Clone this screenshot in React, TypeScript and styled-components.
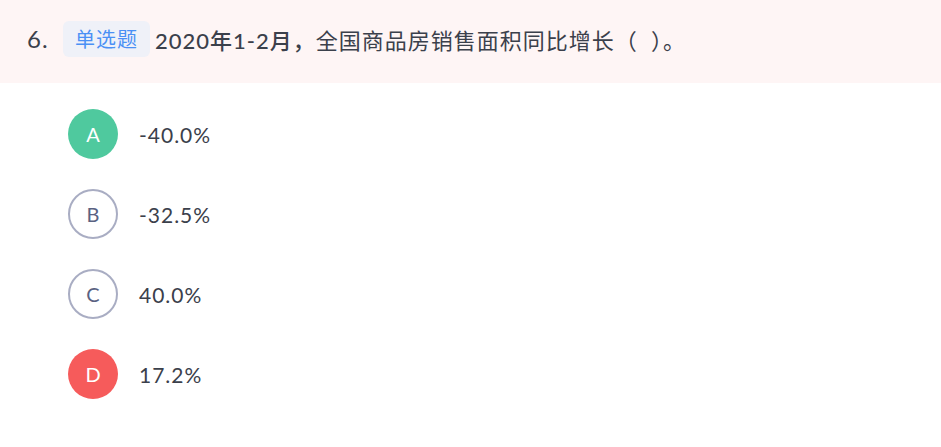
import styled, { createGlobalStyle } from "styled-components";

const GlobalStyle = createGlobalStyle`
  html, body {
    margin: 0;
    padding: 0;
    background: #fff;
    font-family: Lato, "Noto Sans CJK SC", sans-serif;
  }
`;

const Wrapper = styled.div`
  width: 941px;
  height: 447px;
  background: #fff;
`;

const Header = styled.div`
  height: 83px;
  background: #fef5f5;
  display: flex;
  align-items: center;
  padding-left: 27px;
  box-sizing: border-box;
  padding-bottom: 6px;
`;

const Number = styled.span`
  font-size: 24px;
  color: #3b404b;
  width: 36px;
  letter-spacing: 1px;
`;

const Tag = styled.span`
  display: inline-flex;
  align-items: center;
  justify-content: center;
  width: 87px;
  height: 36px;
  border-radius: 6px;
  background: #eff1f8;
  color: #4a90f5;
  font-size: 20px;
  letter-spacing: 1px;
  margin-right: 5px;
`;

const Question = styled.span`
  font-size: 22px;
  letter-spacing: 1px;
  color: #3b404b;
  white-space: pre;
`;

const Strong = styled.span`
  font-weight: 500;
`;

const Options = styled.div`
  display: flex;
  flex-direction: column;
  gap: 30px;
  padding: 26px 0 0 68px;
`;

const Option = styled.div`
  display: flex;
  align-items: center;
  gap: 21px;
`;

const Circle = styled.div<{ variant: "right" | "wrong" | "none" }>`
  width: 50px;
  height: 50px;
  border-radius: 50%;
  box-sizing: border-box;
  display: flex;
  align-items: center;
  justify-content: center;
  font-size: 20px;
  background: ${({ variant }) =>
    variant === "right" ? "#4fc99e" : variant === "wrong" ? "#f65b5b" : "#fff"};
  color: ${({ variant }) => (variant === "none" ? "#5a6282" : "#fff")};
  border: ${({ variant }) => (variant === "none" ? "2px solid #a9adc3" : "none")};
`;

const OptionText = styled.span`
  font-size: 21px;
  letter-spacing: 1px;
  color: #3b404b;
`;

const options = [
  { key: "A", text: "-40.0%", variant: "right" as const },
  { key: "B", text: "-32.5%", variant: "none" as const },
  { key: "C", text: "40.0%", variant: "none" as const },
  { key: "D", text: "17.2%", variant: "wrong" as const },
];

export default function App() {
  return (
    <Wrapper>
      <GlobalStyle />
      <Header>
        <Number>6.</Number>
        <Tag>单选题</Tag>
        <Question>
          <Strong>2020年1-2月，</Strong>全国商品房销售面积同比增长（  ）。
        </Question>
      </Header>
      <Options>
        {options.map((o) => (
          <Option key={o.key}>
            <Circle variant={o.variant}>{o.key}</Circle>
            <OptionText>{o.text}</OptionText>
          </Option>
        ))}
      </Options>
    </Wrapper>
  );
}
